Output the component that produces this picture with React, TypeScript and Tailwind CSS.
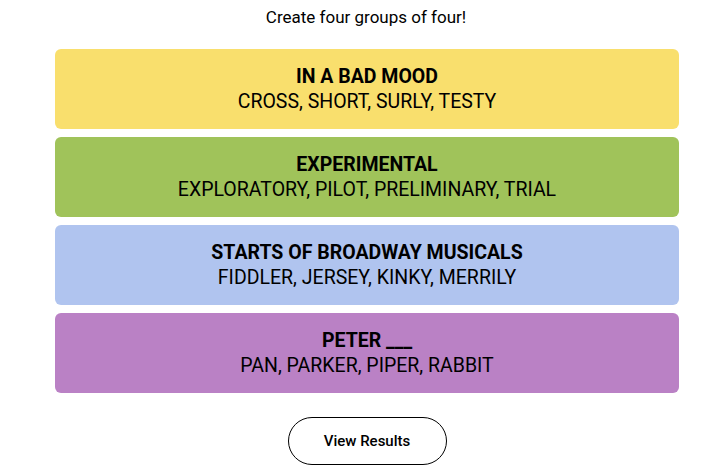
import React from "react";

const groups = [
  { title: "IN A BAD MOOD", words: "CROSS, SHORT, SURLY, TESTY", color: "bg-[#f9df6d]" },
  { title: "EXPERIMENTAL", words: "EXPLORATORY, PILOT, PRELIMINARY, TRIAL", color: "bg-[#a0c35a]" },
  { title: "STARTS OF BROADWAY MUSICALS", words: "FIDDLER, JERSEY, KINKY, MERRILY", color: "bg-[#b0c4ef]" },
  { title: "PETER ___", words: "PAN, PARKER, PIPER, RABBIT", color: "bg-[#ba81c5]" },
];

export default function App() {
  return (
    <div className="w-[728px] h-[467px] bg-white text-black overflow-hidden" style={{ fontFamily: "Roboto, 'Liberation Sans', sans-serif" }}>
      <div className="flex flex-col items-center">
        <p className="mt-[5px] ml-[4px] h-[24px] text-[17px] leading-[24px]">Create four groups of four!</p>
        <div className="mt-[20px] w-[624px] ml-[6px] flex flex-col gap-[8px]">
          {groups.map((g) => (
            <div key={g.title} className={`${g.color} h-[80px] rounded-[6px] flex flex-col items-center justify-center`}>
              <div className="text-[19.5px] leading-[25px] font-bold">{g.title}</div>
              <div className="text-[19.5px] leading-[25px]">{g.words}</div>
            </div>
          ))}
        </div>
        <button className="mt-[24px] ml-[6px] w-[159px] h-[48px] rounded-full border border-black text-[15px] font-medium">
          View Results
        </button>
      </div>
    </div>
  );
}
